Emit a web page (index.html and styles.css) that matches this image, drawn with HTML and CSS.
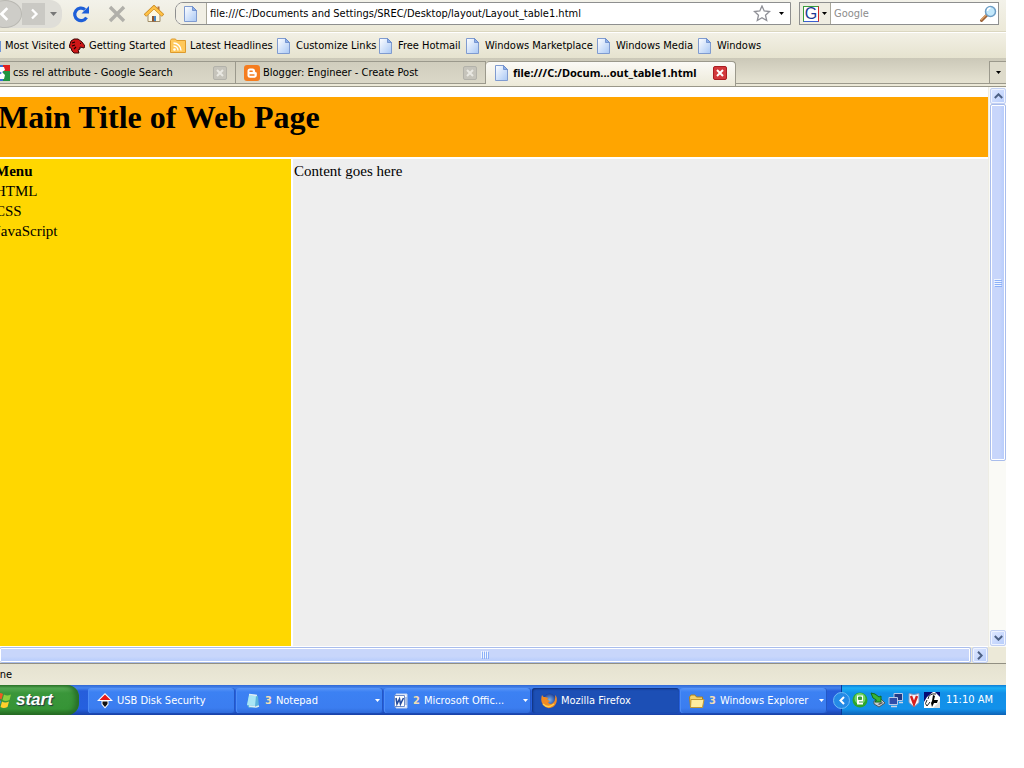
FILE: index.html
```html
<!DOCTYPE html>
<html lang="en">
<head>
<meta charset="utf-8">
<title>Layout_table1.html</title>
<link rel="stylesheet" href="styles.css">
</head>
<body>
<svg class="defs" aria-hidden="true">
  <defs>
    <linearGradient id="paper" x1="0" y1="0" x2="1" y2="1"><stop offset="0" stop-color="#fff"/><stop offset="1" stop-color="#a9c8f5"/></linearGradient>
    <radialGradient id="fox"><stop offset="0" stop-color="#7db4ee"/><stop offset="1" stop-color="#1c3f97"/></radialGradient>
    <symbol id="page" viewBox="0 0 16 16"><path d="M1.500 .5h8l4 4v11h-12z" fill="url(#paper)" stroke="#7f9bd0"/><path d="M9.500 .5v4h4z" fill="#8fb0e8" stroke="#5c80c4" stroke-width=".7"/></symbol>
  </defs>
</svg>
<div class="window">
  <header class="nav">
    <div class="history">
      <button class="back" aria-label="Back"><svg width="14" height="14" viewBox="0 0 12 12"><path d="M8 1L3 6l5 5" fill="none" stroke="#fff" stroke-width="2.300"/></svg></button>
      <button class="forward" aria-label="Forward"><svg width="12" height="12" viewBox="0 0 12 12"><path d="M4 1.500L8.500 6 4 10.500" fill="none" stroke="#fff" stroke-width="2.300"/></svg></button>
      <button class="recent" aria-label="Recent pages"><svg width="7" height="4"><path d="M0 0h7L3.500 4z" fill="#777"/></svg></button>
    </div>
    <div class="actions">
      <button aria-label="Reload"><svg width="18" height="18" viewBox="0 0 18 18"><path d="M14.500 12.500A6.300 6.300 0 1 1 13 4.500" fill="none" stroke="#1e5fd8" stroke-width="3.200"/><path d="M17 1v7.500H9.500z" fill="#1e5fd8"/></svg></button>
      <button aria-label="Stop"><svg width="18" height="18" viewBox="0 0 18 18"><path d="M2 2l14 14M16 2L2 16" stroke="#b1b0aa" stroke-width="3.400"/></svg></button>
      <button aria-label="Home"><svg width="20" height="18" viewBox="0 0 20 18"><path d="M4 9v7.500h12V9l-6-5z" fill="#fff8e0" stroke="#a08d68"/><path d="M13.500 1.500h2v4h-2z" fill="#b4713a"/><path d="M1 10.500L10 2l9 8.500" fill="none" stroke="#c8861c" stroke-width="3.400"/><path d="M1.500 10.200L10 2.300l8.500 7.900" fill="none" stroke="#ffc247" stroke-width="2.400"/><path d="M8 11h4v5.500H8z" fill="#8c5431"/><path d="M10 11h2v5H10z" fill="#4687c4"/></svg></button>
    </div>
    <div class="address">
      <span class="site"><svg width="16" height="16"><use href="#page"/></svg></span>
      <input class="url" type="text" aria-label="Location" value="file:///C:/Documents and Settings/SREC/Desktop/layout/Layout_table1.html">
      <button aria-label="Bookmark this page"><svg width="18" height="17" viewBox="0 0 18 17"><path d="M9 1l2.200 5 5.300.6-4 3.600 1.200 5.300L9 12.800l-4.700 2.700 1.200-5.300-4-3.600L6.800 6z" fill="#fff" stroke="#8f9097" stroke-width="1.300"/></svg></button>
      <button class="drop" aria-label="Show history"><svg width="5" height="3"><path d="M0 0h5L2.500 3z"/></svg></button>
    </div>
    <div class="search">
      <button class="engine" aria-label="Choose search engine"><span class="g">G</span><svg width="5" height="3"><path d="M0 0h5L2.500 3z"/></svg></button>
      <input type="text" aria-label="Search" placeholder="Google">
      <button aria-label="Search"><svg width="18" height="18" viewBox="0 0 18 18"><path d="M8 10L2.500 15.500" stroke="#9b6238" stroke-width="3" stroke-linecap="round"/><path d="M7.500 9.500L2 15" stroke="#e0a368" stroke-width="1.300"/><circle cx="11.500" cy="6.500" r="5" fill="#c3e8fb" stroke="#6f9fc6" stroke-width="1.500"/><path d="M8.500 6a3 3 0 0 1 3-3" fill="none" stroke="#fff" stroke-width="1.500"/></svg></button>
    </div>
  </header>

  <nav class="bookmarks">
    <a href="#"><svg width="16" height="16" viewBox="0 0 16 16"><path d="M1 3h15v11H1z" fill="#6f94d6"/></svg>Most Visited</a>
    <a href="#"><svg width="16" height="16" viewBox="0 0 16 16"><path d="M1 6l1-3 3-2 4 0 4 3 3 4-1 2-4-1 0 2-2 1 1 3-5 0-2-2-1-3-2-1z" fill="#cf1717" stroke="#3a0505"/><path d="M3 5l3-1M3 8l3-1M5 11l2-2M11 5.500h1" stroke="#220000" stroke-width="1.200"/></svg>Getting Started</a>
    <a href="#"><svg width="16" height="16" viewBox="0 0 16 16"><path d="M.5 2.500l1-1.500h4l1 1.500h9v12H.5z" fill="#ffc85a" stroke="#de9b2c"/><circle cx="4.500" cy="11.500" r="1.300" fill="#fff"/><path d="M3.500 8a4.500 4.500 0 0 1 4.500 4.500M3.500 5a7.500 7.500 0 0 1 7.500 7.500" fill="none" stroke="#fff" stroke-width="1.400"/></svg>Latest Headlines</a>
    <a href="#"><svg width="16" height="16"><use href="#page"/></svg>Customize Links</a>
    <a href="#"><svg width="16" height="16"><use href="#page"/></svg>Free Hotmail</a>
    <a href="#"><svg width="16" height="16"><use href="#page"/></svg>Windows Marketplace</a>
    <a href="#"><svg width="16" height="16"><use href="#page"/></svg>Windows Media</a>
    <a href="#"><svg width="16" height="16"><use href="#page"/></svg>Windows</a>
  </nav>

  <div class="tabstrip">
    <div class="tab">
      <svg width="16" height="16" viewBox="0 0 16 16"><rect width="16" height="16" rx="2" fill="#fff"/><path d="M0 0h9v16H0z" fill="#3b6fd8"/><path d="M9 0h7v6H9z" fill="#e02020"/><path d="M9 6h7v10H9z" fill="#219442"/><path d="M10 2H5v4l3 2-3 2v4h5l1-4-3-3 3-2z" fill="#fff"/></svg>
      <span>css rel attribute - Google Search</span>
      <button class="close" aria-label="Close tab"><svg width="8" height="8" viewBox="0 0 8 8"><path d="M1 1l6 6M7 1L1 7" stroke="#e9e8e2" stroke-width="2"/></svg></button>
    </div>
    <div class="tab">
      <svg width="16" height="16" viewBox="0 0 16 16"><rect width="16" height="16" rx="3" fill="#f57d20"/><path d="M6 3.500h2.500A2.500 2.500 0 0 1 11 6q0 1.200 1 1.200.8 0 .8.800v2a2.800 2.800 0 0 1-2.800 2.800H6A2.500 2.500 0 0 1 3.500 10V6A2.500 2.500 0 0 1 6 3.500z" fill="#fff"/><path d="M6 6.300h2.200M6 10h4" stroke="#f57d20" stroke-width="1.400" stroke-linecap="round"/></svg>
      <span>Blogger: Engineer - Create Post</span>
      <button class="close" aria-label="Close tab"><svg width="8" height="8" viewBox="0 0 8 8"><path d="M1 1l6 6M7 1L1 7" stroke="#e9e8e2" stroke-width="2"/></svg></button>
    </div>
    <div class="tab active">
      <svg width="16" height="16"><use href="#page"/></svg>
      <span>file:///C:/Docum...out_table1.html</span>
      <button class="close" aria-label="Close tab"><svg width="8" height="8" viewBox="0 0 8 8"><path d="M1 1l6 6M7 1L1 7" stroke="#fff" stroke-width="2"/></svg></button>
    </div>
    <button class="alltabs" aria-label="List all tabs"><svg width="5" height="3"><path d="M0 0h5L2.500 3z"/></svg></button>
  </div>

  <div class="viewport">
    <main class="doc">
      <h1>Main Title of Web Page</h1>
      <div class="menu"><b>Menu</b><br>HTML<br>CSS<br>JavaScript</div>
      <div class="content">Content goes here</div>
    </main>
    <div class="vbar">
      <button class="sb" aria-label="Scroll up"><svg width="9" height="6"><path d="M.8 5l3.700-3.700L8.200 5" fill="none" stroke="#4d6185" stroke-width="2"/></svg></button>
      <div class="vthumb"><svg width="8" height="8"><path d="M0 .5h7M0 2.500h7M0 4.500h7M0 6.500h7" stroke="#eef4fe"/><path d="M1 1.500h7M1 3.500h7M1 5.500h7M1 7.500h7" stroke="#8cb0f8"/></svg></div>
      <div class="track"></div>
      <button class="sb" aria-label="Scroll down"><svg width="9" height="6"><path d="M.8 1l3.700 3.700L8.200 1" fill="none" stroke="#4d6185" stroke-width="2"/></svg></button>
    </div>
  </div>
  <div class="hbar">
    <div class="hthumb"><svg width="8" height="8"><path d="M.5 0v7M2.500 0v7M4.500 0v7M6.500 0v7" stroke="#eef4fe"/><path d="M1.500 1v7M3.500 1v7M5.500 1v7M7.500 1v7" stroke="#8cb0f8"/></svg></div>
    <button class="sb" aria-label="Scroll right"><svg width="6" height="9"><path d="M1 .8l3.700 3.700L1 8.200" fill="none" stroke="#4d6185" stroke-width="2"/></svg></button>
  </div>
  <div class="status"><span>Done</span></div>

  <footer class="taskbar">
    <button class="start"><svg width="19" height="18" viewBox="0 0 19 18"><path d="M2 3q4-2 7 0L7.500 8.500q-3-2-7 0z" fill="#ee5a24"/><path d="M10 3.500q3 2 7 0L15.500 9q-4 2-7 0z" fill="#8ccf3d"/><path d="M0 10q4-2 7 0L5.500 15.500q-3-2-7 0z" fill="#4d8ff0"/><path d="M8 10.500q3 2 7 0L13.500 16q-4 2-7 0z" fill="#ffcf2d"/></svg>start</button>
    <div class="tasks">
      <button><svg width="16" height="16" viewBox="0 0 16 16"><path d="M8 0l8 8H11.500v3.500L8 15.500 4.500 11.500V8H0z" fill="#fff"/><path d="M8 1.500L13.500 7h-11z" fill="#e81818"/><path d="M5.500 8.500h5V11L8 14 5.500 11z" fill="#111"/></svg><span>USB Disk Security</span></button>
      <button><svg width="16" height="16" viewBox="0 0 16 16"><path d="M4 2l9 1 1 11-10 1-2-3z" fill="#5db4dd"/><path d="M4 2l7 1-1 10-8-1z" fill="#a9e6f5"/><path d="M4 1.500l8 1M4 13l7 1 3-1" stroke="#dceef4" stroke-width="1.500"/></svg><b>3</b><span>Notepad</span><svg class="more" width="5" height="3"><path d="M0 0h5L2.500 3z" fill="#fff"/></svg></button>
      <button><svg width="16" height="16" viewBox="0 0 16 16"><path d="M3 1h11v14H3z" fill="#f5f8ff" stroke="#c3d2ee"/><path d="M1.500 2.500h10v11h-10z" fill="#fff" stroke="#6f8dc8"/><path d="M3 5l1 6 2.500-5 1 5L10.500 5" fill="none" stroke="#284e9f" stroke-width="1.600"/><path d="M13 4v8" stroke="#7a98cc"/></svg><b>2</b><span>Microsoft Offic...</span><svg class="more" width="5" height="3"><path d="M0 0h5L2.500 3z" fill="#fff"/></svg></button>
      <button class="current"><svg width="16" height="16" viewBox="0 0 16 16"><circle cx="8.500" cy="7" r="6.500" fill="url(#fox)"/><path d="M1 2q-2 6 1 10 4 5 10 2 5-4 3.500-10Q15 3 14 2q1 5-2 8-3 2-5-.5L9 8 6 6.500 7.500 5 4 4 2.500 4z" fill="#f08a24"/><path d="M2 11q5 5 11 0" fill="none" stroke="#ffd04a" stroke-width="1.300"/></svg><span>Mozilla Firefox</span></button>
      <button><svg width="16" height="16" viewBox="0 0 16 16"><path d="M.5 4l1.500-2h4l1.500 2h6v10H1.500z" fill="#f6d36b" stroke="#a98022"/><path d="M2 6.500h13l-1.500 8h-12z" fill="#ffec9f" stroke="#c39831"/></svg><b>3</b><span>Windows Explorer</span><svg class="more" width="5" height="3"><path d="M0 0h5L2.500 3z" fill="#fff"/></svg></button>
    </div>
    <div class="tray">
      <button class="expand" aria-label="Show hidden icons"><svg width="8" height="9"><path d="M6 1L2.500 4.500 6 8" fill="none" stroke="#fff" stroke-width="2"/></svg></button>
      <div class="icons">
        <svg width="16" height="16" viewBox="0 0 16 16"><circle cx="8" cy="8" r="7.500" fill="#2da52d"/><circle cx="8" cy="6.500" r="5.500" fill="#73d56b"/><path d="M5 3.500h6v9H5z" fill="#fff"/><path d="M6.500 5h3v2.500h-3zM7 10h4" fill="#3a9e3a" stroke="#3a9e3a"/></svg>
        <svg width="16" height="16" viewBox="0 0 16 16"><path d="M4 9l7-2 4 4-6 4-5-3z" fill="#c6cdd0" stroke="#4d5961"/><path d="M1 1l4 1 4 3 2-1v6H5l1.500-2L3 6z" fill="#38b438" stroke="#126b1b"/><path d="M8 12l4-2 1 1-4 2z" fill="#555"/></svg>
        <svg width="16" height="16" viewBox="0 0 16 16"><path d="M6 1.500h8.500v7H6z" fill="#223985" stroke="#b9c8e6"/><path d="M1 5.500h8.500v7H1z" fill="#304eaa" stroke="#b9c8e6"/><path d="M3 14.500h6M11 10.500h4" stroke="#cbd3e5" stroke-width="1.500"/></svg>
        <svg width="16" height="16" viewBox="0 0 16 16"><path d="M3 1.500q5 2 10 0v9L8 15l-5-4.500z" fill="#f4f6fa" stroke="#8796bd"/><path d="M5 4l3 8 3-8" fill="none" stroke="#d81e1e" stroke-width="2.400"/></svg>
        <svg width="16" height="16" viewBox="0 0 16 16"><path d="M0 0h16v16H0z" fill="#fff"/><path d="M0 0h9L3 5 0 10z" fill="#050a72"/><path d="M11 0h5v5z" fill="#050a72"/><path d="M12 2q-7-1-8 5M3 8q-3 4 0 6l3-4" fill="none" stroke="#222"/><path d="M9 3l2 1-1 4 4 0-1 3-3 0-2 4-1-4 1-2z" fill="#000"/><path d="M16 9v7h-7z" fill="#ddd"/></svg>
      </div>
      <time>11:10 AM</time>
    </div>
  </footer>
</div>
</body>
</html>
```
FILE: styles.css
```css
* { box-sizing: border-box; }
body { margin: 0; background: #fff; overflow: hidden; font: 11px/14px Tahoma, "DejaVu Sans Condensed", sans-serif; color: #000; }
button, input { font: inherit; color: inherit; border: 0; padding: 0; background: none; }
button { display: flex; align-items: center; justify-content: center; flex: none; }
svg { display: block; flex: none; }
.defs { position: absolute; width: 0; height: 0; }
.window { display: flex; flex-direction: column; height: calc(100vh - 53px); min-height: 400px; margin-right: 18px; overflow: hidden; background: #ece9d8; }

.nav { display: flex; align-items: center; flex: none; height: 32px; padding: 0 7px 4px 0; background: linear-gradient(#f3f2ea, #ece9d8); border-bottom: 1px solid #dbd7c0; }
.history { display: flex; align-items: center; flex: none; width: 74px; height: 28px; margin: 0 10px 0 -12px; background: #dfded8; border-radius: 0 12px 12px 0; }
.back { width: 34px; height: 28px; border-radius: 50%; background: #cecdc8; border: 1px solid #b9b8b2; }
.forward { width: 23px; height: 22px; background: #cac9c4; }
.recent { width: 16px; }
.actions { display: flex; gap: 18px; margin-right: 11px; }
.address { display: flex; align-items: center; flex: 1; min-width: 0; height: 23px; background: #fff; border: 1px solid #8e8f8f; border-radius: 8px 0 0 8px; }
.site { display: flex; align-items: center; justify-content: center; width: 31px; height: 21px; background: #f1efe5; border-right: 1px solid #a9a79a; border-radius: 7px 0 0 7px; }
.url { flex: 1; min-width: 0; padding-left: 3px; }
.drop { width: 17px; }
.address .drop { margin-left: 2px; }
.search { display: flex; align-items: center; flex: none; width: 200px; height: 23px; margin-left: 8px; padding-right: 1px; background: #fff; border: 1px solid #8e8f8f; }
.engine { width: 31px; height: 21px; gap: 3px; background: #efede2; border-right: 1px solid #a9a79a; }
.g { width: 16px; height: 16px; border: 1px solid; border-color: #3b9e3b #d02a2a #3b5fd0 #3b9e3b; background: #fff; color: #1c3a94; font: 16px/14px "Liberation Sans", sans-serif; }
.search input { flex: 1; min-width: 0; padding-left: 3px; }
.search input::placeholder { color: #8c8c8c; opacity: 1; }

.bookmarks { display: grid; grid-template-columns: 84px 101px 106px 102px 87px 131px 101px 1fr; align-items: center; flex: none; height: 26px; margin-left: -15px; background: linear-gradient(#f2f0e5, #e6e3cf); border-top: 1px solid #fff; }
.bookmarks a { display: flex; align-items: center; gap: 4px; color: #000; text-decoration: none; white-space: nowrap; }

.tabstrip { display: flex; align-items: flex-start; flex: none; height: 29px; padding-top: 3px; background: linear-gradient(#cbc8b8, #e6e3d2 25px, #9b998c 25px, #9b998c 26px, #ece9d8 26px); border-bottom: 1px solid #999789; margin-left: -14px; }
.tab { display: flex; align-items: center; gap: 3px; flex: 0 1 250px; min-width: 0; height: 23px; padding: 0 8px; background: linear-gradient(#d0cdbd, #dbd8c8); border: solid #9b998c; border-width: 1px 1px 1px 0; white-space: nowrap; }
.tab span { flex: 1; }
.tab.active { height: 25px; background: linear-gradient(#fbfaf6, #ece9d8); border-bottom: 0; border-radius: 4px 4px 0 0; font-weight: bold; font-family: Tahoma, "Noto Sans", sans-serif; padding-bottom: 2px; }
.close { width: 14px; height: 14px; border-radius: 2px; border: 1px solid #b3b2aa; background: #c6c4bb; }
.active .close { background: #d3393c; border-color: #a91d22; }
.alltabs { width: 17px; height: 23px; margin-left: auto; border: solid #9b998c; border-width: 1px 0 1px 1px; background: #dedbcb; }

.viewport { display: flex; flex: 1; min-height: 0; background: #fff; }
.doc { display: grid; flex: 1; min-width: 0; grid-template-columns: 297px 1fr; grid-template-rows: 60px 1fr; gap: 2px; margin-left: -6px; padding: 10px 0 1px; font: 15px/20px "Liberation Serif", serif; }
.doc h1 { grid-column: 1 / -1; margin: 0; padding: 2px 4px; background: #ffa500; font-size: 32px; line-height: 37px; }
.menu, .content { padding: 2px 1px; }
.menu { background: #ffd700; }
.content { background: #eee; }
.vbar { display: flex; flex-direction: column; flex: none; width: 18px; padding: 1px; background: #fafaf6; border-left: 1px solid #eeede5; }
.sb { width: 16px; height: 16px; border: 1px solid #c2d0f2; border-radius: 2px; background: linear-gradient(135deg, #dfe8ff, #b6ccfb); box-shadow: inset 0 0 0 1px #eef3ff; }
.vthumb, .hthumb { display: flex; align-items: center; justify-content: center; border: 1px solid #a9bdec; border-radius: 2px; box-shadow: inset 0 0 0 1px #fff; }
.vthumb { flex: 0 0 360px; flex-basis: 64%; width: 16px; background: linear-gradient(90deg, #c8d6fb 60%, #b5cbfc); }
.track { flex: 1; }
.hbar { display: flex; align-items: center; flex: none; height: 16px; padding-right: 18px; gap: 1px; background: #ece9d8; }
.hthumb { flex: 1; height: 16px; border-left: 0; background: linear-gradient(#c8d6fb 60%, #b5cbfc); }
.status { display: flex; align-items: center; flex: none; height: 22px; margin-left: -14px; border-top: 1px solid #918f82; background: linear-gradient(#e5e2d0, #ece9d8); }

.taskbar { display: flex; flex: none; height: 30px; color: #fff; background: linear-gradient(#3168d5, #4585ed 3px, #265edb 6px, #2560df 24px, #1941a5); }
.start { width: 90px; margin-left: -11px; gap: 3px; justify-content: flex-start; padding-left: 5px; border-radius: 0 12px 12px 0; background: linear-gradient(#2f7a2c, #56ab55 3px, #3a963a 8px, #369436 24px, #25681f); box-shadow: inset -4px 0 5px #286e28; font: italic bold 17px/22px "Liberation Sans", sans-serif; text-shadow: 1px 1px 1px #234; }
.tasks { display: flex; flex: 1; min-width: 0; margin-left: 9px; padding: 3px 0 2px; gap: 1px; }
.tasks button { flex: 0 1 147px; min-width: 0; justify-content: flex-start; gap: 4px; padding: 0 3px 0 9px; border-radius: 3px; background: linear-gradient(#5a96f7, #3c81f3 4px, #3b7df0 20px, #2f6bda); box-shadow: inset 1px 0 #4d8df6, inset -1px 0 #2457c5; white-space: nowrap; overflow: hidden; }
.tasks .current { background: #1c4fb5; box-shadow: inset 1px 1px 2px #10307a; }
.tasks b { color: #f0dcb4; }
.more { margin-left: auto; }
.tray { display: flex; align-items: center; flex: none; width: 165px; padding-right: 13px; background: linear-gradient(#0f7cd6, #1bb0f6 3px, #1290e8 8px, #1291ea 24px, #0e62b5); border-left: 1px solid #0b3a9a; }
.expand { width: 17px; height: 17px; margin-left: -9px; border-radius: 50%; background: #248ae6; border: 1px solid #70baf5; }
.icons { display: flex; gap: 2px; margin: 0 auto 0 2px; }
time { white-space: nowrap; }
```
